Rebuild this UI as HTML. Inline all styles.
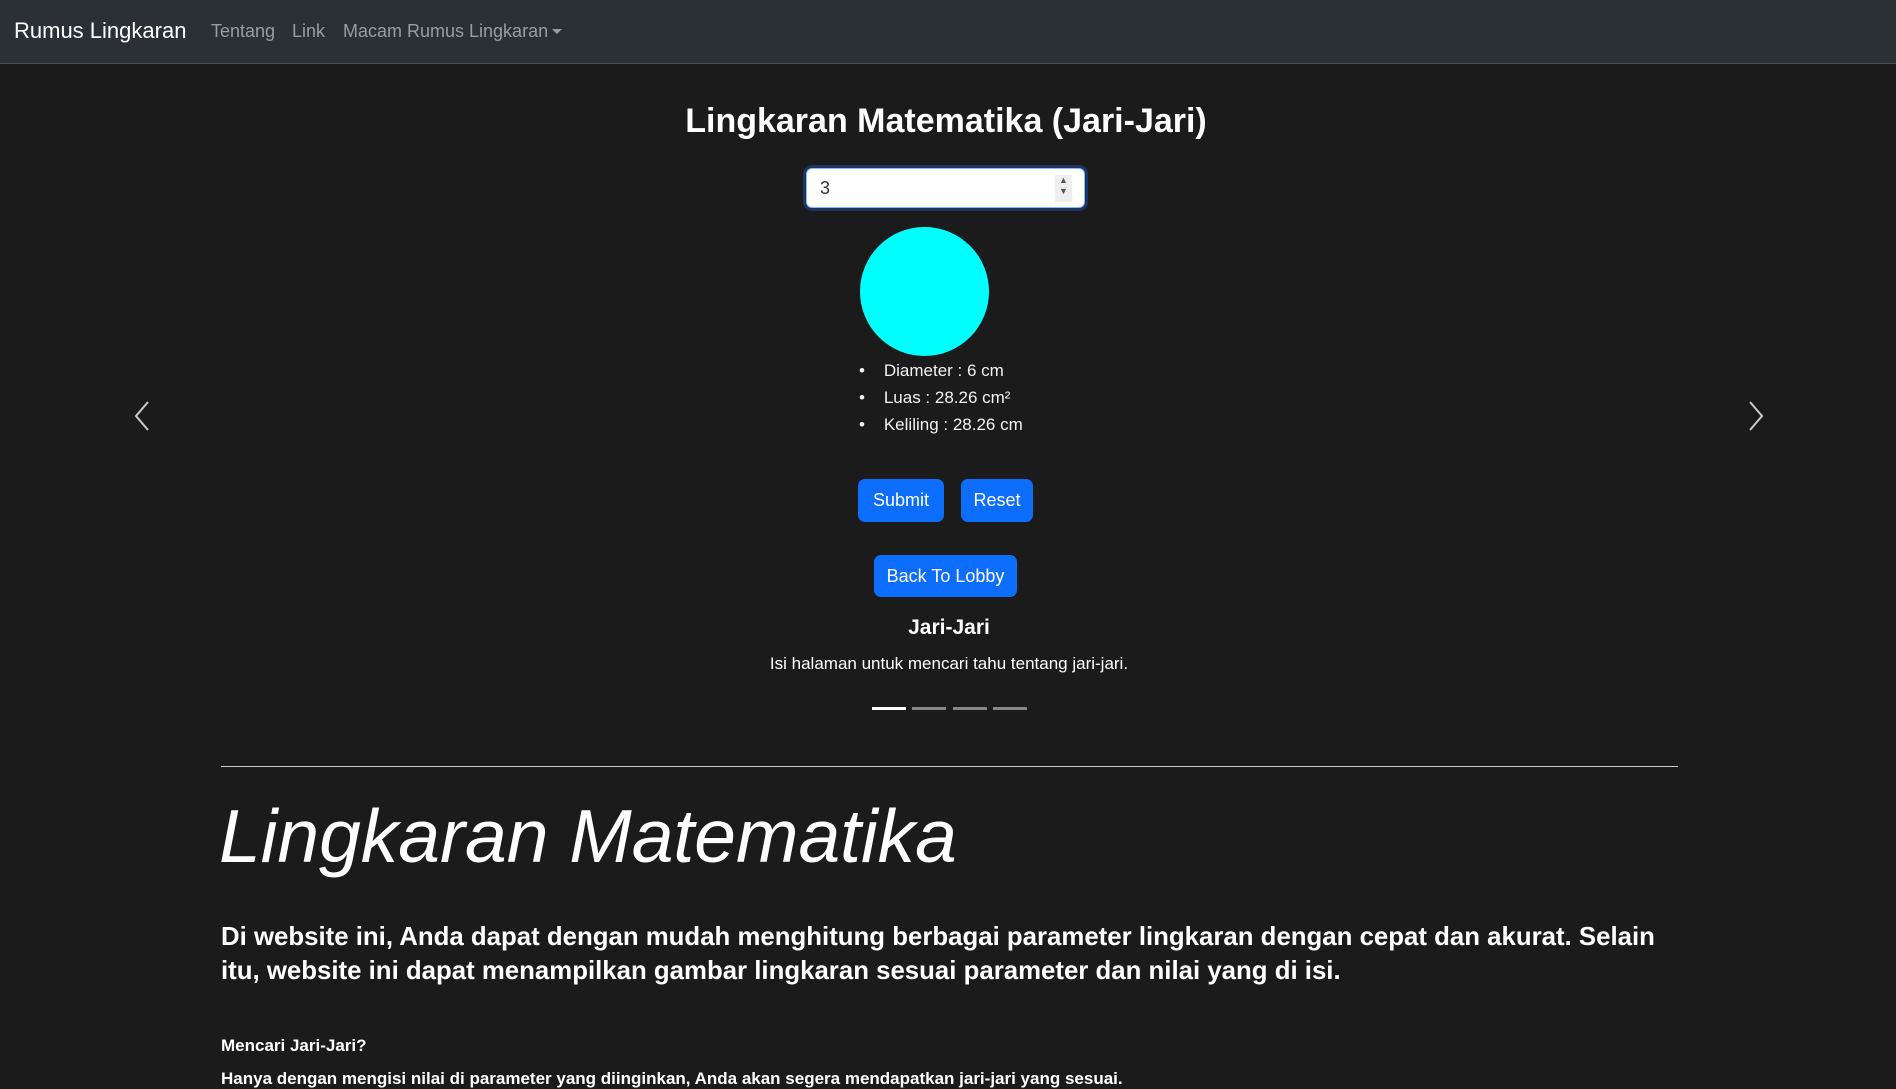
<!DOCTYPE html>
<html><head><meta charset="utf-8"><style>
*{margin:0;padding:0;box-sizing:border-box}
body{width:1896px;height:1080px;overflow:hidden;background:#1b1b1c;color:#dee2e6;font-family:"Liberation Sans",sans-serif;position:relative}
.a{position:absolute;white-space:nowrap}
nav{position:absolute;left:0;top:0;width:1896px;height:64px;background:#2b3035;border-bottom:1px solid #4a4f54}
.btn{position:absolute;background:#0d6efd;color:#fff;border-radius:7px;font-size:18px;display:flex;align-items:center;justify-content:center}
.c{text-align:center;transform:translateX(-50%)}
</style></head><body>
<nav>
<div class="a" style="left:14px;top:18px;font-size:22px;color:#fff">Rumus Lingkaran</div>
<div class="a" style="left:211px;top:21px;font-size:18px;color:#9a9da0">Tentang</div>
<div class="a" style="left:292px;top:21px;font-size:18px;color:#9a9da0">Link</div>
<div class="a" style="left:343px;top:21px;font-size:18px;color:#9a9da0">Macam Rumus Lingkaran</div>
<div class="a" style="left:552px;top:29px;width:0;height:0;border-left:5px solid transparent;border-right:5px solid transparent;border-top:5px solid #9a9da0"></div>
</nav>
<div class="a c" style="left:946px;top:102px;font-size:34px;font-weight:bold;color:#fff">Lingkaran Matematika (Jari-Jari)</div>
<div class="a" style="left:803px;top:165px;width:285px;height:46px;border-radius:9px;background:#1d3460"></div>
<div class="a" style="left:806px;top:168px;width:279px;height:40px;border-radius:6px;background:#fff;border:1px solid #86b7fe"></div>
<div class="a" style="left:820px;top:178px;font-size:18px;color:#333">3</div>
<div class="a" style="left:1055px;top:175px;width:17px;height:27px;background:#eee;font-size:9px;color:#555;line-height:11px;text-align:center">▲<br>▼</div>
<div class="a" style="left:860px;top:227px;width:129px;height:129px;border-radius:50%;background:#00ffff"></div>
<div class="a" style="left:859px;top:357px;font-size:17px;line-height:27px;color:#f2f2f2">
<div>•&nbsp;&nbsp;&nbsp;&nbsp;Diameter : 6 cm</div>
<div>•&nbsp;&nbsp;&nbsp;&nbsp;Luas : 28.26 cm²</div>
<div>•&nbsp;&nbsp;&nbsp;&nbsp;Keliling : 28.26 cm</div>
</div>
<div class="btn" style="left:858px;top:479px;width:86px;height:43px">Submit</div>
<div class="btn" style="left:961px;top:479px;width:72px;height:43px">Reset</div>
<div class="btn" style="left:874px;top:555px;width:143px;height:42px">Back To Lobby</div>
<div class="a c" style="left:949px;top:616px;font-size:21px;font-weight:bold;color:#fff">Jari-Jari</div>
<div class="a c" style="left:949px;top:654px;font-size:17px;color:#fff">Isi halaman untuk mencari tahu tentang jari-jari.</div>
<div class="a" style="left:872px;top:707px;width:34px;height:3px;background:#fff"></div>
<div class="a" style="left:912px;top:707px;width:34px;height:3px;background:#888"></div>
<div class="a" style="left:953px;top:707px;width:34px;height:3px;background:#888"></div>
<div class="a" style="left:993px;top:707px;width:34px;height:3px;background:#888"></div>
<svg class="a" style="left:130px;top:400px" width="24" height="32" viewBox="0 0 24 32"><path d="M18 2 L6 16 L18 30" stroke="#ccc" stroke-width="2" fill="none"/></svg>
<svg class="a" style="left:1744px;top:400px" width="24" height="32" viewBox="0 0 24 32"><path d="M6 2 L18 16 L6 30" stroke="#ccc" stroke-width="2" fill="none"/></svg>
<div class="a" style="left:221px;top:766px;width:1457px;height:1px;background:#ccc"></div>
<div class="a" style="left:219px;top:793px;font-size:75px;font-style:italic;font-weight:300;color:#fff">Lingkaran Matematika</div>
<div class="a" style="left:221px;top:920px;width:1470px;font-size:25.8px;font-weight:bold;line-height:34px;white-space:normal;color:#fff">Di website ini, Anda dapat dengan mudah menghitung berbagai parameter lingkaran dengan cepat dan akurat. Selain itu, website ini dapat menampilkan gambar lingkaran sesuai parameter dan nilai yang di isi.</div>
<div class="a" style="left:221px;top:1036px;font-size:17px;font-weight:bold;color:#fff">Mencari Jari-Jari?</div>
<div class="a" style="left:221px;top:1069px;font-size:17px;font-weight:bold;color:#fff">Hanya dengan mengisi nilai di parameter yang diinginkan, Anda akan segera mendapatkan jari-jari yang sesuai.</div>
</body></html>
